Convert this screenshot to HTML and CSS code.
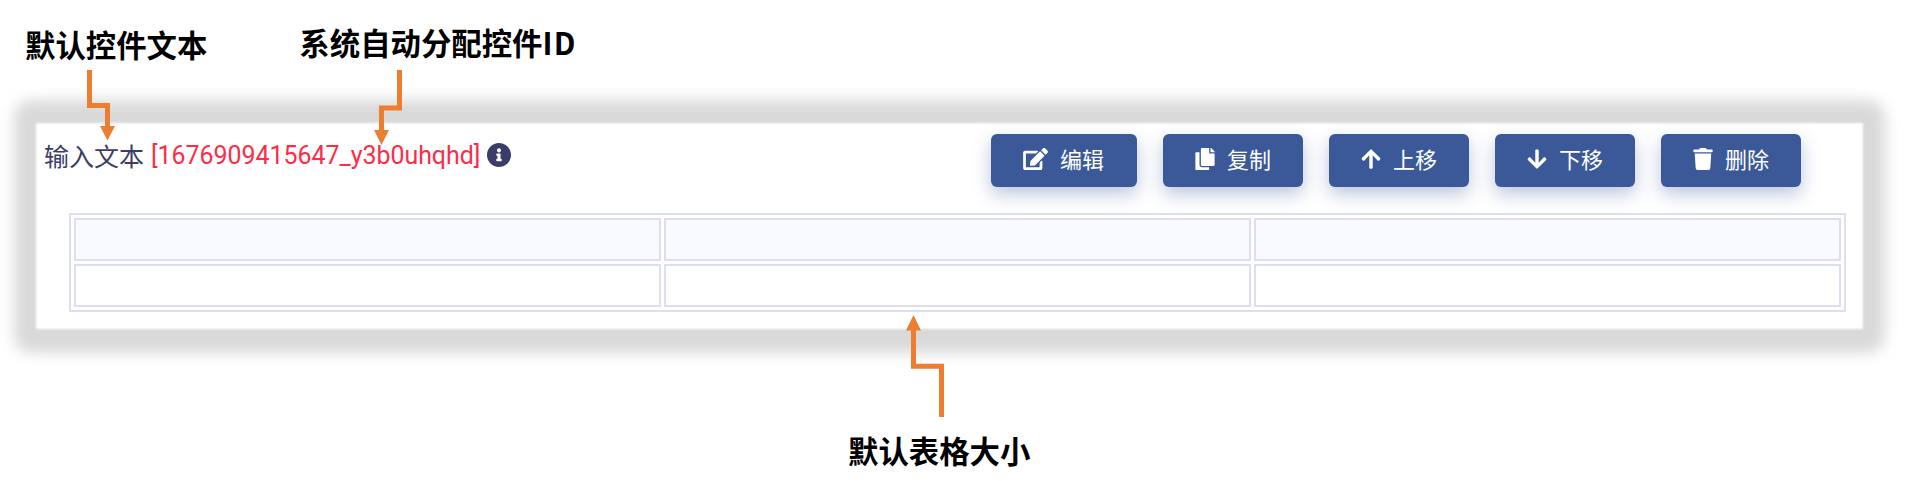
FILE: index.html
```html
<!DOCTYPE html>
<html lang="zh-CN">
<head>
<meta charset="utf-8">
<title>默认表格控件</title>
<link rel="stylesheet" href="styles.css">
</head>
<body>
<main class="page">
  <div class="notes">
    <span class="note">默认控件文本</span>
    <span class="note note-id">系统自动分配控件<span class="latin">ID</span></span>
  </div>
  <section class="panel">
    <header class="bar">
      <div class="title">
        <span class="name">输入文本</span>
        <span class="id">[1676909415647_y3b0uhqhd]</span>
        <svg class="info" viewBox="8 8 496 496"><path d="M256 8C119.043 8 8 119.083 8 256c0 136.997 111.043 248 248 248s248-111.003 248-248C504 119.083 392.957 8 256 8zm0 110c23.196 0 42 18.804 42 42s-18.804 42-42 42-42-18.804-42-42 18.804-42 42-42zm56 254c0 6.627-5.373 12-12 12h-88c-6.627 0-12-5.373-12-12v-24c0-6.627 5.373-12 12-12h12v-64h-12c-6.627 0-12-5.373-12-12v-24c0-6.627 5.373-12 12-12h64c6.627 0 12 5.373 12 12v100h12c6.627 0 12 5.373 12 12v24z"/></svg>
      </div>
      <div class="actions">
        <button class="btn btn-wide"><svg class="icon icon-wide" viewBox="0 0 576 512"><path d="M402.6 83.2l90.2 90.2c3.8 3.8 3.8 10 0 13.8L274.4 405.6l-92.8 10.3c-12.4 1.4-22.9-9.1-21.5-21.5l10.3-92.8L388.8 83.2c3.8-3.8 10-3.8 13.8 0zm162-22.9l-48.8-48.8c-15.2-15.2-39.9-15.2-55.2 0l-35.4 35.4c-3.8 3.8-3.8 10 0 13.8l90.2 90.2c3.8 3.8 10 3.8 13.8 0l35.4-35.4c15.2-15.3 15.2-40 0-55.2zM384 346.2V448H64V128h229.8c3.2 0 6.2-1.3 8.5-3.5l40-40c7.6-7.6 2.2-20.5-8.5-20.5H48C21.5 64 0 85.5 0 112v352c0 26.5 21.5 48 48 48h352c26.5 0 48-21.5 48-48V306.2c0-10.7-12.9-16-20.5-8.5l-40 40c-2.2 2.3-3.5 5.3-3.5 8.5z"/></svg><span class="label">编辑</span></button>
        <button class="btn"><svg class="icon" viewBox="0 0 448 512"><path d="M320 448v40c0 13.255-10.745 24-24 24H24c-13.255 0-24-10.745-24-24V120c0-13.255 10.745-24 24-24h72v296c0 30.879 25.121 56 56 56h168zm0-344V0H152c-13.255 0-24 10.745-24 24v368c0 13.255 10.745 24 24 24h272c13.255 0 24-10.745 24-24V128H344c-13.2 0-24-10.8-24-24zm120.971-31.029L375.029 7.029A24 24 0 0 0 358.059 0H352v96h96v-6.059a24 24 0 0 0-7.029-16.97z"/></svg><span class="label">复制</span></button>
        <button class="btn"><svg class="icon" viewBox="0 0 448 512"><path d="M34.9 289.5l-22.2-22.2c-9.4-9.4-9.4-24.6 0-33.9L207 39c9.4-9.4 24.6-9.4 33.9 0l194.3 194.3c9.4 9.4 9.4 24.6 0 33.9L413 289.4c-9.5 9.5-25 9.3-34.3-.4L264 168.6V456c0 13.3-10.7 24-24 24h-32c-13.3 0-24-10.7-24-24V168.6L69.2 289.1c-9.3 9.8-24.8 10-34.3.4z"/></svg><span class="label">上移</span></button>
        <button class="btn"><svg class="icon" viewBox="0 0 448 512"><path d="M413.1 222.5l22.2 22.2c9.4 9.4 9.4 24.6 0 33.9L241 473c-9.4 9.4-24.6 9.4-33.9 0L12.7 278.6c-9.4-9.4-9.4-24.6 0-33.9l22.2-22.2c9.5-9.5 25-9.3 34.3.4L184 343.4V56c0-13.3 10.7-24 24-24h32c13.3 0 24 10.7 24 24v287.4l114.8-120.5c9.3-9.8 24.8-10 34.3-.4z"/></svg><span class="label">下移</span></button>
        <button class="btn"><svg class="icon" viewBox="0 0 448 512"><path d="M432 32H312l-9.4-18.7A24 24 0 0 0 281.1 0H166.8a23.72 23.72 0 0 0-21.4 13.3L136 32H16A16 16 0 0 0 0 48v32a16 16 0 0 0 16 16h416a16 16 0 0 0 16-16V48a16 16 0 0 0-16-16zM53.2 467a48 48 0 0 0 47.9 45h245.8a48 48 0 0 0 47.9-45L416 128H32z"/></svg><span class="label">删除</span></button>
      </div>
    </header>
    <table class="grid">
      <thead><tr><th></th><th></th><th></th></tr></thead>
      <tbody><tr><td></td><td></td><td></td></tr></tbody>
    </table>
  </section>
  <div class="footnote"><span class="note">默认表格大小</span></div>
  <svg class="arrows" viewBox="0 0 1910 481">
    <path class="line" d="M89.5 70V105.5H107.5V127M399.500 70V108H381.500V131M941.500 417V366.300H913.500V329"/>
    <path class="head" d="M100 126h15l-7.500 14.500zM374 130h15l-7.500 15zM906 330.500h15l-7.500-15.500z"/>
  </svg>
</main>
</body>
</html>
```

FILE: styles.css
```css
body {
  margin: 0;
  background: #fff;
  font-family: Roboto, "Noto Sans CJK SC", sans-serif;
}

.page {
  position: relative;
  z-index: 0;
  box-sizing: border-box;
  width: 1910px;
  height: 481px;
  padding: 22px 47px 0 36px;
  overflow: hidden;
}

.notes {
  display: flex;
  align-items: flex-start;
  height: 101px;
  margin-left: -11px;
}

.note {
  color: #000;
  font: bold 30.4px/44px "Noto Sans CJK SC", sans-serif;
  white-space: nowrap;
}

.note-id {
  margin: -2px 0 0 92px;
}

.latin {
  letter-spacing: 1.2px;
}

.panel {
  position: relative;
  box-sizing: border-box;
  height: 206px;
  padding: 11px 17px 0 9px;
}

/* soft grey halo around the panel */
.panel::before {
  content: "";
  position: absolute;
  z-index: -2;
  inset: -23px -22px -24px;
  border-radius: 18px;
  background: #d9d9d9;
  filter: blur(7px);
}

/* white surface with a slightly feathered edge */
.panel::after {
  content: "";
  position: absolute;
  z-index: -1;
  inset: 0;
  background: #fff;
  filter: blur(1px);
}

.bar {
  display: flex;
  justify-content: space-between;
  height: 79px;
  padding-right: 45px;
}

.title {
  display: flex;
  align-items: center;
  height: 42px;
  color: #3b3c68;
  font-size: 25px;
  white-space: nowrap;
}

.name {
  margin: -1px 0 0 -1px;
}

.id {
  margin-left: 7px;
  color: #fd2c48;
  font-size: 24.9px;
}

.info {
  width: 24px;
  height: 24px;
  margin-left: 7px;
  fill: #3b3c68;
}

.actions {
  display: flex;
  gap: 26px;
}

.btn {
  display: flex;
  align-items: center;
  gap: 12px;
  box-sizing: border-box;
  width: 140px;
  height: 53px;
  padding: 0 0 3px 32px;
  border: 0;
  border-radius: 6px;
  background: #3b5998;
  box-shadow: 0 7px 18px rgba(59, 89, 152, 0.35);
  color: #fff;
  font: 22px/32px "Noto Sans CJK SC", sans-serif;
  white-space: nowrap;
}

.btn-wide {
  width: 146px;
}

.label {
  margin-top: -2px;
}

.icon {
  flex: none;
  width: 20px;
  height: 22px;
  fill: #fff;
}

.icon-wide {
  width: 25px;
}

.grid {
  width: 1777px;
  height: 99px;
  margin-left: 24px;
  border: 2px solid #dddff1;
  border-collapse: separate;
  border-spacing: 3px;
  table-layout: fixed;
}

.grid th,
.grid td {
  box-sizing: border-box;
  height: 43px;
  padding: 0;
  border: 2px solid #dddff1;
}

.grid th {
  background: #f9faff;
}

.footnote {
  padding: 99px 0 0 812px;
}

.arrows {
  position: absolute;
  top: 0;
  left: 0;
  width: 1910px;
  height: 481px;
  pointer-events: none;
}

.line {
  fill: none;
  stroke: #ed7d31;
  stroke-width: 5;
}

.head {
  fill: #ed7d31;
}
```
